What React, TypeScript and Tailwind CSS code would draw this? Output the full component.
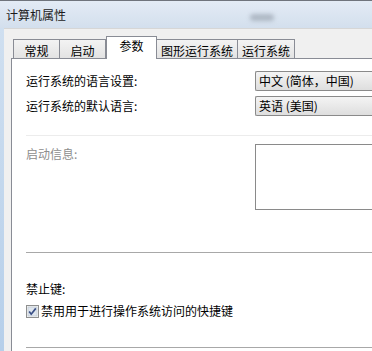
import React from "react";

const tabs = [
  { label: "常规", w: "w-[47px]" },
  { label: "启动", w: "w-[47px]" },
  { label: "参数", w: "w-[51px]", active: true },
  { label: "图形运行系统", w: "w-[82px]" },
  { label: "运行系统", w: "w-[58px]" },
];

const Combo = ({ text }: { text: string }) => (
  <div className="ml-auto flex h-[20px] w-[117px] shrink-0 items-center rounded-l-[2px] border border-r-0 border-[#8a8a8a] bg-gradient-to-b from-[#f4f4f4] to-[#dedede] pl-[3px] text-[12px] leading-[16px] text-black">
    {text}
  </div>
);

const Check = () => (
  <svg width="13" height="13" viewBox="0 0 13 13" className="shrink-0">
    <rect x="0.5" y="0.5" width="12" height="12" fill="#f4f4f4" stroke="#8e8f8f" />
    <rect x="2" y="2" width="9" height="9" fill="#dfe6ee" stroke="#b8c2cc" strokeWidth="0.6" />
    <path d="M3.2 6.6 L5.2 9.2 L9.8 3.4" fill="none" stroke="#3a4f86" strokeWidth="1.7" />
  </svg>
);

export default function App() {
  return (
    <div className="flex h-[351px] w-[372px] flex-col overflow-hidden bg-[#f0f0f0] font-['Noto_Sans_CJK_SC',sans-serif] text-[12px] leading-[16px] text-black">
      {/* Title bar */}
      <div className="flex h-[28px] shrink-0 items-center border-t border-[#6f747c] bg-gradient-to-b from-[#e3ebf5] to-[#d3dfed] pl-[6px]">
        <span className="text-[#1b1b1b]">计算机属性</span>
        <div className="ml-[184px] mt-[6px] h-[7px] w-[24px] rounded-full bg-[#aeb8c4] blur-[2px]" />
      </div>

      <div className="flex flex-1">
        {/* frame */}
        <div className="w-[4px] shrink-0 bg-gradient-to-b from-[#cfdff0] to-[#b6cfea]" />

        <div className="flex flex-1 flex-col border-t border-[#d6d6d6] pl-[7px] pt-[7px]">
          {/* Tabs */}
          <div className="flex h-[22px] items-end pl-[2px]">
            {tabs.map((t) =>
              t.active ? (
                <div
                  key={t.label}
                  className={`${t.w} relative z-10 -mb-px flex h-[23px] shrink-0 justify-center border border-b-0 border-[#898c95] bg-white pt-[1px]`}
                >
                  {t.label}
                </div>
              ) : (
                <div
                  key={t.label}
                  className={`${t.w} -ml-px flex h-[19px] shrink-0 justify-center border border-b-0 border-[#898c95] bg-gradient-to-b from-[#f3f3f3] to-[#e3e3e3] pt-[3px] first:ml-0`}
                >
                  {t.label}
                </div>
              )
            )}
          </div>

          {/* Panel */}
          <div className="flex flex-1 flex-col border-l border-t border-[#898c95] bg-white pl-[14px]">
            <div className="mt-[12px] flex items-center">
              <span>运行系统的语言设置:</span>
              <Combo text="中文 (简体，中国)" />
            </div>
            <div className="mt-[5px] flex items-center">
              <span>运行系统的默认语言:</span>
              <Combo text="英语 (美国)" />
            </div>

            <div className="mt-[19px] h-px bg-[#ececec]" />

            <div className="mt-[8px] flex items-start">
              <span className="mt-[2px] text-[#8d8d8d]">启动信息:</span>
              <div className="ml-auto h-[66px] w-[117px] shrink-0 border border-r-0 border-[#8a8a8a] bg-white" />
            </div>

            <div className="mt-[42px] h-px bg-[#a8a8a8]" />

            <div className="mt-[28px]">禁止键:</div>
            <div className="mt-[6px] flex items-center gap-[2px]">
              <Check />
              <span>禁用用于进行操作系统访问的快捷键</span>
            </div>

            <div className="mt-[28px] h-px bg-[#a8a8a8]" />
          </div>
        </div>
      </div>
    </div>
  );
}
